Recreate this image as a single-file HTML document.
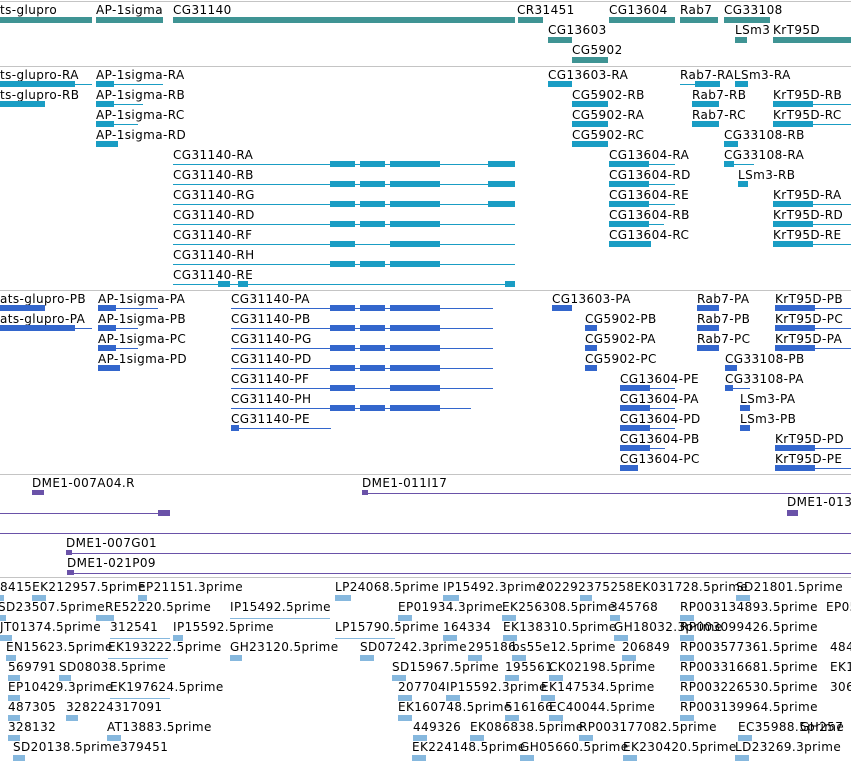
<!DOCTYPE html>
<html><head><meta charset="utf-8"><style>
html,body{margin:0;padding:0;background:#fff}
#c{position:relative;width:851px;height:762px;overflow:hidden;background:#fff;font-family:"DejaVu Sans","Liberation Sans",sans-serif;font-size:12px}
#c div{position:absolute}
.t{line-height:14px;color:#000;white-space:nowrap;letter-spacing:0.4px}
.s{left:0;width:851px;height:1px;background:#c4c4c4}
.g{background:#3f9494;height:6px}
.r{background:#1a9dc4}
.p{background:#3366cc}
.d{background:#6a52a8}
.e{background:#86b8de}
.l{height:1px}
.x{height:6px}
</style></head><body><div id="c">
<div class="s" style="top:1px"></div>
<div class="s" style="top:66px"></div>
<div class="s" style="top:290px"></div>
<div class="s" style="top:474px"></div>
<div class="s" style="top:577px"></div>

<div class="t" style="left:0;top:3px">ts-glupro</div><div class="g" style="left:0;top:17px;width:92px"></div>
<div class="t" style="left:96px;top:3px">AP-1sigma</div><div class="g" style="left:96px;top:17px;width:67px"></div>
<div class="t" style="left:173px;top:3px">CG31140</div><div class="g" style="left:173px;top:17px;width:342px"></div>
<div class="t" style="left:517px;top:3px">CR31451</div><div class="g" style="left:518px;top:17px;width:25px"></div>
<div class="t" style="left:609px;top:3px">CG13604</div><div class="g" style="left:609px;top:17px;width:66px"></div>
<div class="t" style="left:680px;top:3px">Rab7</div><div class="g" style="left:680px;top:17px;width:38px"></div>
<div class="t" style="left:724px;top:3px">CG33108</div><div class="g" style="left:724px;top:17px;width:46px"></div>
<div class="t" style="left:548px;top:23px">CG13603</div><div class="g" style="left:548px;top:37px;width:24px"></div>
<div class="t" style="left:735px;top:23px">LSm3</div><div class="g" style="left:735px;top:37px;width:12px"></div>
<div class="t" style="left:773px;top:23px">KrT95D</div><div class="g" style="left:773px;top:37px;width:78px"></div>
<div class="t" style="left:572px;top:43px">CG5902</div><div class="g" style="left:572px;top:57px;width:36px"></div>

<div class="t" style="left:0;top:68px">ts-glupro-RA</div><div class="r l" style="left:0;top:84px;width:92px"></div><div class="r x" style="left:0;top:81px;width:75px"></div>
<div class="t" style="left:0;top:88px">ts-glupro-RB</div><div class="r x" style="left:0;top:101px;width:45px"></div>
<div class="t" style="left:96px;top:68px">AP-1sigma-RA</div><div class="r l" style="left:96px;top:84px;width:67px"></div><div class="r x" style="left:96px;top:81px;width:18px"></div>
<div class="t" style="left:96px;top:88px">AP-1sigma-RB</div><div class="r l" style="left:96px;top:104px;width:47px"></div><div class="r x" style="left:96px;top:101px;width:18px"></div>
<div class="t" style="left:96px;top:108px">AP-1sigma-RC</div><div class="r l" style="left:96px;top:124px;width:42px"></div><div class="r x" style="left:96px;top:121px;width:18px"></div>
<div class="t" style="left:96px;top:128px">AP-1sigma-RD</div><div class="r x" style="left:96px;top:141px;width:22px"></div>

<div class="t" style="left:173px;top:148px">CG31140-RA</div><div class="r l" style="left:173px;top:164px;width:342px"></div><div class="r x" style="left:330px;top:161px;width:25px"></div><div class="r x" style="left:360px;top:161px;width:25px"></div><div class="r x" style="left:390px;top:161px;width:50px"></div><div class="r x" style="left:488px;top:161px;width:27px"></div>
<div class="t" style="left:173px;top:168px">CG31140-RB</div><div class="r l" style="left:173px;top:184px;width:342px"></div><div class="r x" style="left:330px;top:181px;width:25px"></div><div class="r x" style="left:360px;top:181px;width:25px"></div><div class="r x" style="left:390px;top:181px;width:50px"></div><div class="r x" style="left:488px;top:181px;width:27px"></div>
<div class="t" style="left:173px;top:188px">CG31140-RG</div><div class="r l" style="left:173px;top:204px;width:342px"></div><div class="r x" style="left:330px;top:201px;width:25px"></div><div class="r x" style="left:360px;top:201px;width:25px"></div><div class="r x" style="left:390px;top:201px;width:50px"></div><div class="r x" style="left:488px;top:201px;width:27px"></div>
<div class="t" style="left:173px;top:208px">CG31140-RD</div><div class="r l" style="left:173px;top:224px;width:342px"></div><div class="r x" style="left:330px;top:221px;width:25px"></div><div class="r x" style="left:360px;top:221px;width:25px"></div><div class="r x" style="left:390px;top:221px;width:50px"></div>
<div class="t" style="left:173px;top:228px">CG31140-RF</div><div class="r l" style="left:173px;top:244px;width:342px"></div><div class="r x" style="left:330px;top:241px;width:25px"></div><div class="r x" style="left:390px;top:241px;width:50px"></div>
<div class="t" style="left:173px;top:248px">CG31140-RH</div><div class="r l" style="left:173px;top:264px;width:342px"></div><div class="r x" style="left:330px;top:261px;width:25px"></div><div class="r x" style="left:360px;top:261px;width:25px"></div><div class="r x" style="left:390px;top:261px;width:50px"></div>
<div class="t" style="left:173px;top:268px">CG31140-RE</div><div class="r l" style="left:173px;top:284px;width:342px"></div><div class="r x" style="left:218px;top:281px;width:12px"></div><div class="r x" style="left:238px;top:281px;width:10px"></div><div class="r x" style="left:505px;top:281px;width:10px"></div>

<div class="t" style="left:548px;top:68px">CG13603-RA</div><div class="r x" style="left:548px;top:81px;width:24px"></div>
<div class="t" style="left:572px;top:88px">CG5902-RB</div><div class="r x" style="left:572px;top:101px;width:36px"></div>
<div class="t" style="left:572px;top:108px">CG5902-RA</div><div class="r x" style="left:572px;top:121px;width:36px"></div>
<div class="t" style="left:572px;top:128px">CG5902-RC</div><div class="r x" style="left:572px;top:141px;width:36px"></div>
<div class="t" style="left:609px;top:148px">CG13604-RA</div><div class="r l" style="left:609px;top:164px;width:66px"></div><div class="r x" style="left:609px;top:161px;width:40px"></div>
<div class="t" style="left:609px;top:168px">CG13604-RD</div><div class="r l" style="left:609px;top:184px;width:66px"></div><div class="r x" style="left:609px;top:181px;width:40px"></div>
<div class="t" style="left:609px;top:188px">CG13604-RE</div><div class="r l" style="left:609px;top:204px;width:66px"></div><div class="r x" style="left:609px;top:201px;width:40px"></div>
<div class="t" style="left:609px;top:208px">CG13604-RB</div><div class="r l" style="left:609px;top:224px;width:55px"></div><div class="r x" style="left:609px;top:221px;width:40px"></div>
<div class="t" style="left:609px;top:228px">CG13604-RC</div><div class="r x" style="left:609px;top:241px;width:42px"></div>
<div class="t" style="left:680px;top:68px">Rab7-RALSm3-RA</div><div class="r l" style="left:680px;top:84px;width:40px"></div><div class="r x" style="left:695px;top:81px;width:25px"></div><div class="r x" style="left:735px;top:81px;width:13px"></div>
<div class="t" style="left:692px;top:88px">Rab7-RB</div><div class="r x" style="left:692px;top:101px;width:27px"></div>
<div class="t" style="left:692px;top:108px">Rab7-RC</div><div class="r x" style="left:692px;top:121px;width:27px"></div>
<div class="t" style="left:724px;top:128px">CG33108-RB</div><div class="r x" style="left:724px;top:141px;width:14px"></div>
<div class="t" style="left:724px;top:148px">CG33108-RA</div><div class="r l" style="left:724px;top:164px;width:30px"></div><div class="r x" style="left:724px;top:161px;width:10px"></div>
<div class="t" style="left:738px;top:168px">LSm3-RB</div><div class="r x" style="left:738px;top:181px;width:10px"></div>
<div class="t" style="left:773px;top:88px">KrT95D-RB</div><div class="r l" style="left:773px;top:104px;width:78px"></div><div class="r x" style="left:773px;top:101px;width:40px"></div>
<div class="t" style="left:773px;top:108px">KrT95D-RC</div><div class="r l" style="left:773px;top:124px;width:78px"></div><div class="r x" style="left:773px;top:121px;width:40px"></div>
<div class="t" style="left:773px;top:188px">KrT95D-RA</div><div class="r l" style="left:773px;top:204px;width:78px"></div><div class="r x" style="left:773px;top:201px;width:40px"></div>
<div class="t" style="left:773px;top:208px">KrT95D-RD</div><div class="r l" style="left:773px;top:224px;width:78px"></div><div class="r x" style="left:773px;top:221px;width:40px"></div>
<div class="t" style="left:773px;top:228px">KrT95D-RE</div><div class="r l" style="left:773px;top:244px;width:78px"></div><div class="r x" style="left:773px;top:241px;width:40px"></div>

<div class="t" style="left:0;top:292px">ats-glupro-PB</div><div class="p x" style="left:0;top:305px;width:45px"></div>
<div class="t" style="left:0;top:312px">ats-glupro-PA</div><div class="p l" style="left:0;top:328px;width:92px"></div><div class="p x" style="left:0;top:325px;width:75px"></div>
<div class="t" style="left:98px;top:292px">AP-1sigma-PA</div><div class="p l" style="left:98px;top:308px;width:60px"></div><div class="p x" style="left:98px;top:305px;width:18px"></div>
<div class="t" style="left:98px;top:312px">AP-1sigma-PB</div><div class="p l" style="left:98px;top:328px;width:40px"></div><div class="p x" style="left:98px;top:325px;width:18px"></div>
<div class="t" style="left:98px;top:332px">AP-1sigma-PC</div><div class="p l" style="left:98px;top:348px;width:40px"></div><div class="p x" style="left:98px;top:345px;width:18px"></div>
<div class="t" style="left:98px;top:352px">AP-1sigma-PD</div><div class="p x" style="left:98px;top:365px;width:22px"></div>
<div class="t" style="left:231px;top:292px">CG31140-PA</div><div class="p l" style="left:231px;top:308px;width:262px"></div><div class="p x" style="left:330px;top:305px;width:25px"></div><div class="p x" style="left:360px;top:305px;width:25px"></div><div class="p x" style="left:390px;top:305px;width:50px"></div>
<div class="t" style="left:231px;top:312px">CG31140-PB</div><div class="p l" style="left:231px;top:328px;width:262px"></div><div class="p x" style="left:330px;top:325px;width:25px"></div><div class="p x" style="left:360px;top:325px;width:25px"></div><div class="p x" style="left:390px;top:325px;width:50px"></div>
<div class="t" style="left:231px;top:332px">CG31140-PG</div><div class="p l" style="left:231px;top:348px;width:262px"></div><div class="p x" style="left:330px;top:345px;width:25px"></div><div class="p x" style="left:360px;top:345px;width:25px"></div><div class="p x" style="left:390px;top:345px;width:50px"></div>
<div class="t" style="left:231px;top:352px">CG31140-PD</div><div class="p l" style="left:231px;top:368px;width:262px"></div><div class="p x" style="left:330px;top:365px;width:25px"></div><div class="p x" style="left:360px;top:365px;width:25px"></div><div class="p x" style="left:390px;top:365px;width:50px"></div>
<div class="t" style="left:231px;top:372px">CG31140-PF</div><div class="p l" style="left:231px;top:388px;width:262px"></div><div class="p x" style="left:330px;top:385px;width:25px"></div><div class="p x" style="left:390px;top:385px;width:50px"></div>
<div class="t" style="left:231px;top:392px">CG31140-PH</div><div class="p l" style="left:231px;top:408px;width:240px"></div><div class="p x" style="left:330px;top:405px;width:25px"></div><div class="p x" style="left:360px;top:405px;width:25px"></div><div class="p x" style="left:390px;top:405px;width:50px"></div>
<div class="t" style="left:231px;top:412px">CG31140-PE</div><div class="p l" style="left:231px;top:428px;width:100px"></div><div class="p x" style="left:231px;top:425px;width:8px"></div>
<div class="t" style="left:552px;top:292px">CG13603-PA</div><div class="p x" style="left:552px;top:305px;width:20px"></div>
<div class="t" style="left:585px;top:312px">CG5902-PB</div><div class="p x" style="left:585px;top:325px;width:12px"></div>
<div class="t" style="left:585px;top:332px">CG5902-PA</div><div class="p x" style="left:585px;top:345px;width:12px"></div>
<div class="t" style="left:585px;top:352px">CG5902-PC</div><div class="p x" style="left:585px;top:365px;width:12px"></div>
<div class="t" style="left:620px;top:372px">CG13604-PE</div><div class="p l" style="left:620px;top:388px;width:55px"></div><div class="p x" style="left:620px;top:385px;width:30px"></div>
<div class="t" style="left:620px;top:392px">CG13604-PA</div><div class="p l" style="left:620px;top:408px;width:55px"></div><div class="p x" style="left:620px;top:405px;width:30px"></div>
<div class="t" style="left:620px;top:412px">CG13604-PD</div><div class="p l" style="left:620px;top:428px;width:55px"></div><div class="p x" style="left:620px;top:425px;width:30px"></div>
<div class="t" style="left:620px;top:432px">CG13604-PB</div><div class="p l" style="left:620px;top:448px;width:45px"></div><div class="p x" style="left:620px;top:445px;width:30px"></div>
<div class="t" style="left:620px;top:452px">CG13604-PC</div><div class="p x" style="left:620px;top:465px;width:18px"></div>
<div class="t" style="left:697px;top:292px">Rab7-PA</div><div class="p x" style="left:697px;top:305px;width:22px"></div>
<div class="t" style="left:697px;top:312px">Rab7-PB</div><div class="p x" style="left:697px;top:325px;width:22px"></div>
<div class="t" style="left:697px;top:332px">Rab7-PC</div><div class="p x" style="left:697px;top:345px;width:22px"></div>
<div class="t" style="left:725px;top:352px">CG33108-PB</div><div class="p x" style="left:725px;top:365px;width:12px"></div>
<div class="t" style="left:725px;top:372px">CG33108-PA</div><div class="p l" style="left:725px;top:388px;width:25px"></div><div class="p x" style="left:725px;top:385px;width:8px"></div>
<div class="t" style="left:740px;top:392px">LSm3-PA</div><div class="p x" style="left:740px;top:405px;width:10px"></div>
<div class="t" style="left:740px;top:412px">LSm3-PB</div><div class="p x" style="left:740px;top:425px;width:10px"></div>
<div class="t" style="left:775px;top:292px">KrT95D-PB</div><div class="p l" style="left:775px;top:308px;width:76px"></div><div class="p x" style="left:775px;top:305px;width:40px"></div>
<div class="t" style="left:775px;top:312px">KrT95D-PC</div><div class="p l" style="left:775px;top:328px;width:76px"></div><div class="p x" style="left:775px;top:325px;width:40px"></div>
<div class="t" style="left:775px;top:332px">KrT95D-PA</div><div class="p l" style="left:775px;top:348px;width:76px"></div><div class="p x" style="left:775px;top:345px;width:40px"></div>
<div class="t" style="left:775px;top:432px">KrT95D-PD</div><div class="p l" style="left:775px;top:448px;width:76px"></div><div class="p x" style="left:775px;top:445px;width:40px"></div>
<div class="t" style="left:775px;top:452px">KrT95D-PE</div><div class="p l" style="left:775px;top:468px;width:76px"></div><div class="p x" style="left:775px;top:465px;width:40px"></div>

<div class="t" style="left:32px;top:476px">DME1-007A04.R</div><div class="d x" style="left:32px;top:490px;width:12px;height:5px"></div>
<div class="d l" style="left:0;top:513px;width:170px"></div><div class="d x" style="left:158px;top:510px;width:12px"></div>
<div class="t" style="left:362px;top:476px">DME1-011I17</div><div class="d l" style="left:362px;top:493px;width:489px"></div><div class="d x" style="left:362px;top:490px;width:6px;height:5px"></div>
<div class="t" style="left:787px;top:495px">DME1-013</div><div class="d x" style="left:787px;top:510px;width:11px"></div>
<div class="d l" style="left:0;top:533px;width:851px"></div>
<div class="t" style="left:66px;top:536px">DME1-007G01</div><div class="d l" style="left:66px;top:553px;width:785px"></div><div class="d x" style="left:66px;top:550px;width:6px;height:5px"></div>
<div class="t" style="left:67px;top:556px">DME1-021P09</div><div class="d l" style="left:67px;top:573px;width:784px"></div><div class="d x" style="left:67px;top:570px;width:7px;height:5px"></div>

<div class="t" style="left:0;top:580px">8415EK212957.5prime</div><div class="t" style="left:138px;top:580px">EP21151.3prime</div><div class="t" style="left:335px;top:580px">LP24068.5prime</div><div class="t" style="left:443px;top:580px">IP15492.3prime</div><div class="t" style="left:538px;top:580px">202292375258EK031728.5prime</div><div class="t" style="left:736px;top:580px">SD21801.5prime</div>
<div class="t" style="left:-2px;top:600px">SD23507.5primeRE52220.5prime</div><div class="t" style="left:230px;top:600px">IP15492.5prime</div><div class="t" style="left:398px;top:600px">EP01934.3prime</div><div class="t" style="left:502px;top:600px">EK256308.5prime</div><div class="t" style="left:610px;top:600px">345768</div><div class="t" style="left:680px;top:600px">RP003134893.5prime</div><div class="t" style="left:826px;top:600px">EP05</div>
<div class="t" style="left:0;top:620px">JT01374.5prime</div><div class="t" style="left:110px;top:620px">312541</div><div class="t" style="left:173px;top:620px">IP15592.5prime</div><div class="t" style="left:335px;top:620px">LP15790.5prime</div><div class="t" style="left:443px;top:620px">164334</div><div class="t" style="left:503px;top:620px">EK138310.5prime</div><div class="t" style="left:614px;top:620px">GH18032.3prime</div><div class="t" style="left:680px;top:620px">RP003099426.5prime</div>
<div class="t" style="left:6px;top:640px">EN15623.5prime</div><div class="t" style="left:108px;top:640px">EK193222.5prime</div><div class="t" style="left:230px;top:640px">GH23120.5prime</div><div class="t" style="left:360px;top:640px">SD07242.3prime</div><div class="t" style="left:468px;top:640px">295186</div><div class="t" style="left:512px;top:640px">bs55e12.5prime</div><div class="t" style="left:622px;top:640px">206849</div><div class="t" style="left:680px;top:640px">RP003577361.5prime</div><div class="t" style="left:830px;top:640px">484</div>
<div class="t" style="left:8px;top:660px">569791</div><div class="t" style="left:59px;top:660px">SD08038.5prime</div><div class="t" style="left:392px;top:660px">SD15967.5prime</div><div class="t" style="left:505px;top:660px">195561</div><div class="t" style="left:549px;top:660px">CK02198.5prime</div><div class="t" style="left:680px;top:660px">RP003316681.5prime</div><div class="t" style="left:830px;top:660px">EK1</div>
<div class="t" style="left:8px;top:680px">EP10429.3prime</div><div class="t" style="left:110px;top:680px">EK197624.5prime</div><div class="t" style="left:398px;top:680px">207704</div><div class="t" style="left:446px;top:680px">IP15592.3prime</div><div class="t" style="left:541px;top:680px">EK147534.5prime</div><div class="t" style="left:680px;top:680px">RP003226530.5prime</div><div class="t" style="left:830px;top:680px">306</div>
<div class="t" style="left:8px;top:700px">487305</div><div class="t" style="left:66px;top:700px">328224317091</div><div class="t" style="left:398px;top:700px">EK160748.5prime</div><div class="t" style="left:505px;top:700px">516166</div><div class="t" style="left:549px;top:700px">EC40044.5prime</div><div class="t" style="left:680px;top:700px">RP003139964.5prime</div>
<div class="t" style="left:8px;top:720px">328132</div><div class="t" style="left:107px;top:720px">AT13883.5prime</div><div class="t" style="left:413px;top:720px">449326</div><div class="t" style="left:470px;top:720px">EK086838.5prime</div><div class="t" style="left:579px;top:720px">RP003177082.5prime</div><div class="t" style="left:738px;top:720px">EC35988.5prime</div><div class="t" style="left:800px;top:720px">GH257</div>
<div class="t" style="left:13px;top:740px">SD20138.5prime379451</div><div class="t" style="left:412px;top:740px">EK224148.5prime</div><div class="t" style="left:520px;top:740px">GH05660.5prime</div><div class="t" style="left:623px;top:740px">EK230420.5prime</div><div class="t" style="left:735px;top:740px">LD23269.3prime</div>

<div class="e x" style="left:0;top:595px;width:4px"></div><div class="e x" style="left:32px;top:595px;width:14px"></div><div class="e x" style="left:138px;top:595px;width:9px"></div><div class="e x" style="left:335px;top:595px;width:16px"></div><div class="e x" style="left:443px;top:595px;width:16px"></div><div class="e x" style="left:580px;top:595px;width:12px"></div><div class="e x" style="left:736px;top:595px;width:14px"></div>
<div class="e x" style="left:0;top:615px;width:6px"></div><div class="e x" style="left:96px;top:615px;width:18px"></div><div class="e l" style="left:230px;top:618px;width:100px"></div><div class="e x" style="left:398px;top:615px;width:14px"></div><div class="e x" style="left:502px;top:615px;width:14px"></div><div class="e x" style="left:610px;top:615px;width:10px"></div><div class="e x" style="left:680px;top:615px;width:14px"></div>
<div class="e x" style="left:0;top:635px;width:12px"></div><div class="e l" style="left:110px;top:638px;width:60px"></div><div class="e x" style="left:173px;top:635px;width:10px"></div><div class="e l" style="left:335px;top:638px;width:60px"></div><div class="e x" style="left:443px;top:635px;width:14px"></div><div class="e x" style="left:503px;top:635px;width:14px"></div><div class="e x" style="left:614px;top:635px;width:14px"></div><div class="e x" style="left:680px;top:635px;width:14px"></div>
<div class="e x" style="left:6px;top:655px;width:10px"></div><div class="e l" style="left:108px;top:658px;width:60px"></div><div class="e x" style="left:230px;top:655px;width:12px"></div><div class="e x" style="left:360px;top:655px;width:14px"></div><div class="e x" style="left:468px;top:655px;width:14px"></div><div class="e x" style="left:512px;top:655px;width:14px"></div><div class="e x" style="left:622px;top:655px;width:14px"></div><div class="e x" style="left:680px;top:655px;width:14px"></div>
<div class="e x" style="left:8px;top:675px;width:12px"></div><div class="e x" style="left:59px;top:675px;width:12px"></div><div class="e x" style="left:392px;top:675px;width:14px"></div><div class="e x" style="left:505px;top:675px;width:14px"></div><div class="e x" style="left:549px;top:675px;width:14px"></div><div class="e x" style="left:680px;top:675px;width:14px"></div>
<div class="e x" style="left:8px;top:695px;width:12px"></div><div class="e l" style="left:110px;top:698px;width:60px"></div><div class="e x" style="left:398px;top:695px;width:14px"></div><div class="e x" style="left:446px;top:695px;width:14px"></div><div class="e x" style="left:541px;top:695px;width:14px"></div><div class="e x" style="left:680px;top:695px;width:14px"></div>
<div class="e x" style="left:8px;top:715px;width:12px"></div><div class="e x" style="left:66px;top:715px;width:12px"></div><div class="e x" style="left:398px;top:715px;width:14px"></div><div class="e x" style="left:505px;top:715px;width:14px"></div><div class="e x" style="left:549px;top:715px;width:14px"></div><div class="e x" style="left:680px;top:715px;width:14px"></div>
<div class="e x" style="left:8px;top:735px;width:12px"></div><div class="e x" style="left:107px;top:735px;width:14px"></div><div class="e x" style="left:413px;top:735px;width:14px"></div><div class="e x" style="left:470px;top:735px;width:14px"></div><div class="e x" style="left:579px;top:735px;width:14px"></div><div class="e x" style="left:738px;top:735px;width:14px"></div>
<div class="e x" style="left:13px;top:755px;width:12px"></div><div class="e x" style="left:412px;top:755px;width:14px"></div><div class="e x" style="left:520px;top:755px;width:14px"></div><div class="e x" style="left:623px;top:755px;width:14px"></div><div class="e x" style="left:735px;top:755px;width:14px"></div>
</div></body></html>
